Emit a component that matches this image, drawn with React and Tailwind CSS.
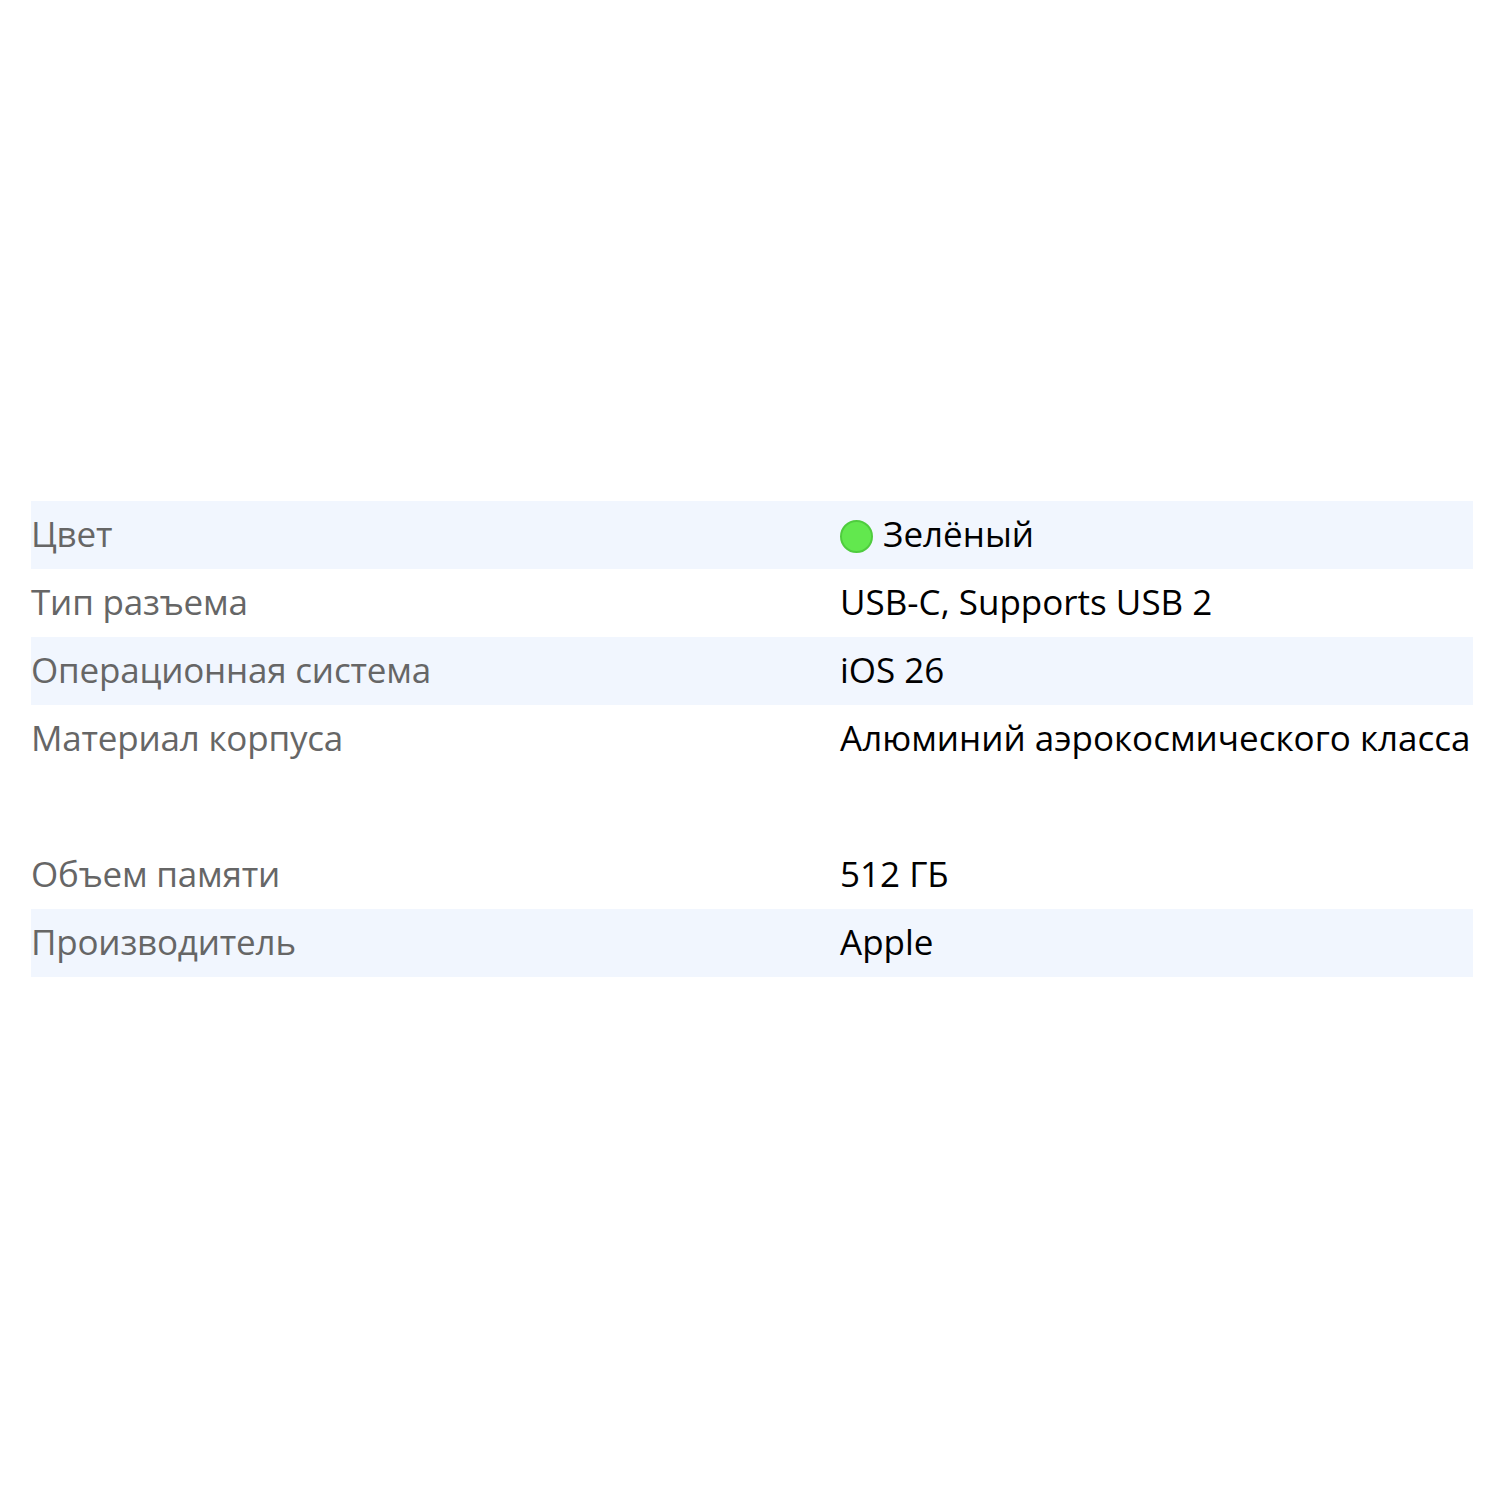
const rows = [
    { label: 'Цвет', value: 'Зелёный', dot: true, striped: true },
    { label: 'Тип разъема', value: 'USB-C, Supports USB 2' },
    { label: 'Операционная система', value: 'iOS 26', striped: true },
    { label: 'Материал корпуса', value: 'Алюминий аэрокосмического класса' },
    { spacer: true },
    { label: 'Объем памяти', value: '512 ГБ' },
    { label: 'Производитель', value: 'Apple', striped: true },
];

export default function App() {
    return (
        <div className="w-[1500px] h-[1500px] bg-white flex flex-col pt-[501px] pl-[31px] pr-[27px]" style={{ fontFamily: '"Open Sans", "Noto Sans", sans-serif' }}>
            {rows.map((row, i) =>
                row.spacer ? (
                    <div key={i} className="h-[68px]" />
                ) : (
                    <div
                        key={i}
                        className={`h-[68px] pb-[3px] flex items-center ${row.striped ? 'bg-[#f1f6fe]' : ''}`}
                    >
                        <div className="w-[809px] text-[35px] leading-none text-[#666666] tracking-[-0.2px]">{row.label}</div>
                        <div className="flex-1 flex items-center gap-[10px] text-[35px] leading-none text-black">
                            {row.dot && (
                                <span className="w-[33px] h-[33px] mt-[5px] rounded-full bg-[#62e84e] border-2 border-[#4fcc3e]" />
                            )}
                            <span>{row.value}</span>
                        </div>
                    </div>
                )
            )}
        </div>
    );
}
